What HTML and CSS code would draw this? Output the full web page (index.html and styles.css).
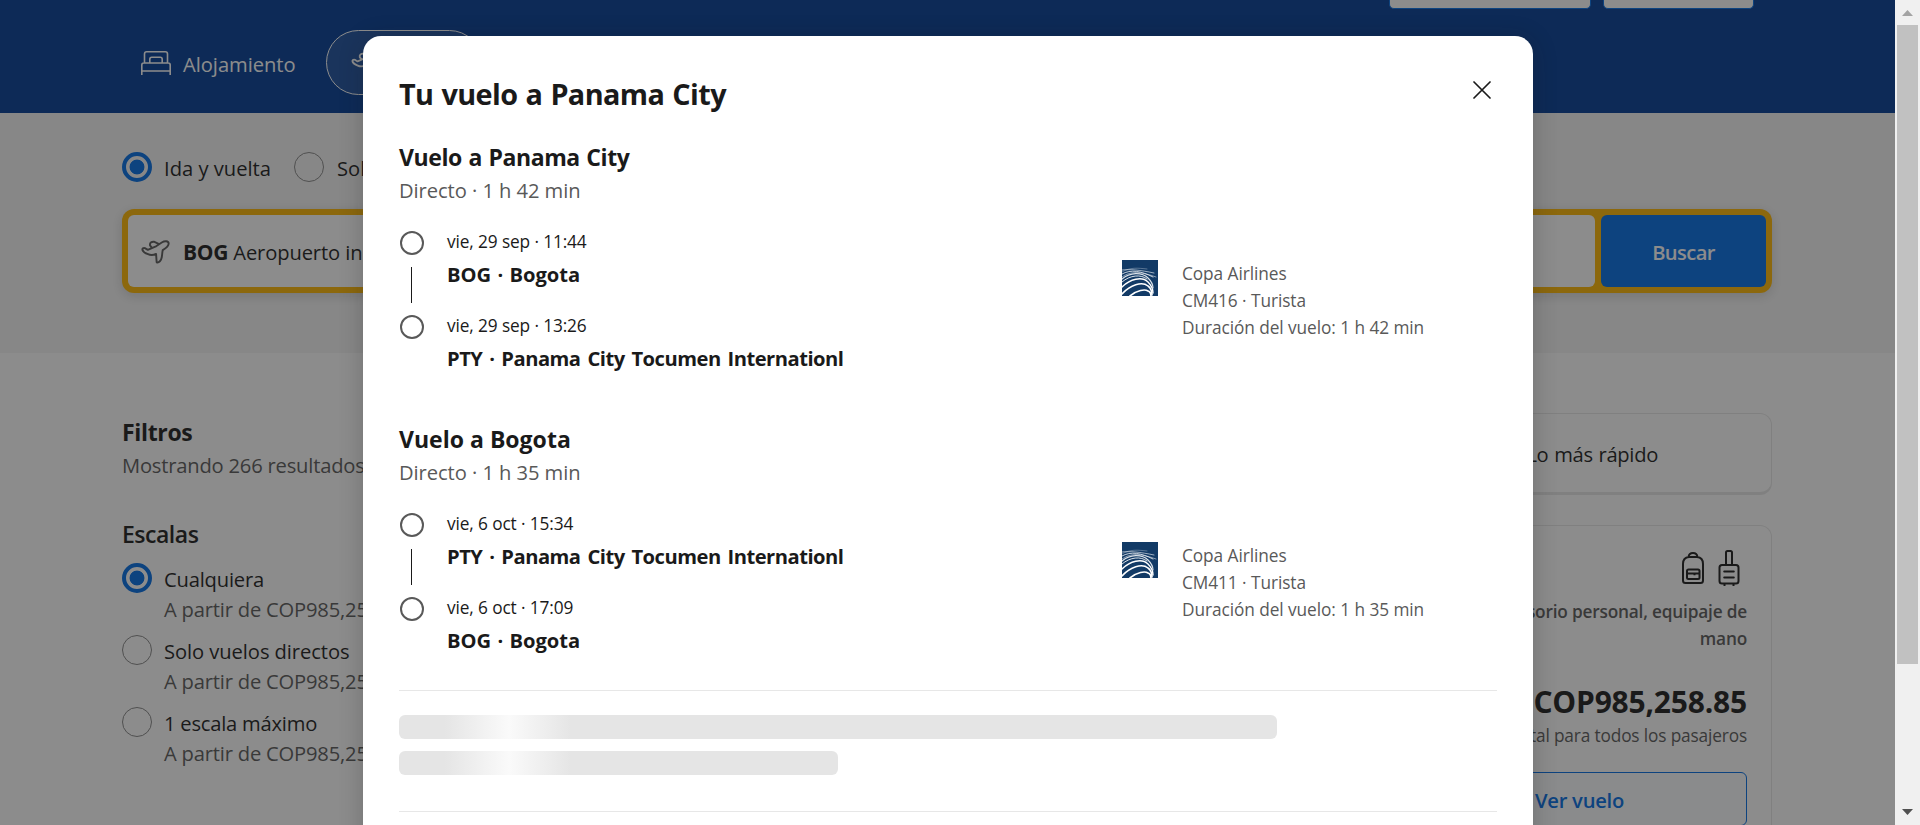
FILE: index.html
```html
<!DOCTYPE html>
<html lang="es">
<head>
<meta charset="utf-8">
<title>Vuelos</title>
<link rel="stylesheet" href="styles.css">
</head>
<body>
<svg width="0" height="0" class="defs">
  <symbol id="plane" viewBox="0 0 30 26"><path d="M1.500 11.500 C1 10 2.300 9 4 9.500 L7 11.300 L16 7.300 L21.500 3.600 C24.500 1.800 28.500 1.800 28.700 4.600 C28.800 7.500 26.500 9.300 22.500 11.600 C22 14 22 16 21.500 19 C21 22.300 18.500 25 16.200 24.200 L15.600 15.600 C12.500 17 10 17.200 7.200 15.800 C4.500 14.800 2.200 13.500 1.500 11.500 Z M11.300 9.200 L9.300 6.600 C8.800 4.200 10.800 2.600 13.300 2.800 L18.800 5.400" fill="none" stroke="currentColor" stroke-width="2" stroke-linejoin="round" stroke-linecap="round"/></symbol>
  <symbol id="copa" viewBox="0 0 36 36">
    <rect width="36" height="36" fill="#123a66"/>
    <g fill="none" stroke="#fff" stroke-linecap="round">
      <path d="M0 12 C8 7 16 8 25 9" stroke-width=".6" opacity=".5"/>
      <path d="M0 10 C8 9 18 10 32 13" stroke-width=".9" opacity=".65"/>
      <path d="M0 14 C9 9 19 11 31 17" stroke-width="1" opacity=".75"/>
      <path d="M0 17 C8 11 18 11 34 17" stroke-width=".8" opacity=".6"/>
      <path d="M0 19 C8 12 20 12 26 18 C29 21 31 24 31 28" stroke-width="1.200" opacity=".85"/>
      <path d="M0 22 C8 15 19 14 25 19" stroke-width="1" opacity=".85"/>
      <path d="M0 27 C8 19 20 16 26 22 C30 26 31 29 31 33" stroke-width="1.400"/>
      <path d="M0 34 C8 25 20 21 26 26 C30 29 30 32 30 35" stroke-width="1.600"/>
      <path d="M8 36 C15 30 23 29 26 31 C29 32 29 34 29 36" stroke-width="1.700"/>
    </g>
  </symbol>
</svg>
<div class="window">
  <div class="viewport">
    <header class="header">
      <div class="account"><span class="account-btn wide"></span><span class="account-btn"></span></div>
      <nav class="nav">
        <a class="nav-item">
          <svg width="30" height="24" viewBox="0 0 30 24" fill="none" stroke="currentColor" stroke-width="1.600"><path d="M.8 24 V14 Q.8 12 2.800 12 H27.200 Q29.200 12 29.200 14 V24 M.8 20 H29.200 M3.500 12 V3 Q3.500 .8 5.700 .8 H24.300 Q26.500 .8 26.500 3 V12 M8.800 12 V8.300 Q8.800 6.300 10.800 6.300 H19.200 Q21.200 6.300 21.200 8.300 V12"/></svg>
          <span>Alojamiento</span>
        </a>
        <a class="nav-item active"><svg width="28" height="24"><use href="#plane"/></svg></a>
      </nav>
    </header>
    <section class="search">
      <div class="trip">
        <span class="radio on"></span><span class="trip-label first">Ida y vuelta</span>
        <span class="radio"></span><span class="trip-label">Sol</span>
      </div>
      <div class="searchbox">
        <div class="field"><svg width="29" height="25"><use href="#plane"/></svg><span><b>BOG</b> Aeropuerto in</span></div>
        <div class="submit">Buscar</div>
      </div>
    </section>
    <main class="results">
      <aside class="filters">
        <h2>Filtros</h2>
        <p class="count">Mostrando 266 resultados</p>
        <h3>Escalas</h3>
        <div class="option"><span class="radio on"></span><div><p>Cualquiera</p><p class="from">A partir de COP985,258.85</p></div></div>
        <div class="option"><span class="radio"></span><div><p class="directs">Solo vuelos directos</p><p class="from">A partir de COP985,258.85</p></div></div>
        <div class="option"><span class="radio"></span><div><p class="one-stop">1 escala máximo</p><p class="from">A partir de COP985,258.85</p></div></div>
      </aside>
      <div class="list">
        <div class="tab">Lo más rápido</div>
        <article class="card">
          <div class="bags">
            <svg width="24" height="36" viewBox="0 0 24 36" fill="none" stroke="currentColor" stroke-width="2"><path d="M2 14 Q2 7.500 8 7 H16 Q22 7.500 22 14 V30.500 Q22 33 19.500 33 H4.500 Q2 33 2 30.500 Z M7.500 7 Q8 3 12 3 Q16 3 16.500 7"/><rect x="6" y="19.500" width="12.500" height="9.500" rx="1.500"/><path d="M6 23.500 H18.500 M13.500 23.500 V25.300"/></svg>
            <svg width="24" height="36" viewBox="0 0 24 36" fill="none" stroke="currentColor" stroke-width="2"><rect x="2.500" y="15" width="19" height="18.500" rx="2.500"/><path d="M9 15 V2.500 Q9 1 10.500 1 H13.500 Q15 1 15 2.500 V15 M7.200 21.500 H16.800 M7.200 27.500 H16.800" stroke-linecap="round"/><path d="M7.500 34 V36 M16.500 34 V36"/></svg>
          </div>
          <p class="bag-text">Incluye: accesorio personal, equipaje de<br>mano</p>
          <p class="price">COP985,258.85</p>
          <p class="total">Total para todos los pasajeros</p>
          <div class="view">Ver vuelo</div>
        </article>
      </div>
    </main>
    <div class="overlay">
      <section class="modal">
        <div class="modal-head">
          <h1>Tu vuelo a Panama City</h1>
          <svg class="close" width="18" height="18" viewBox="0 0 18 18" stroke="#1a1a1a" stroke-width="1.700" stroke-linecap="round"><path d="M1 1 L17 17 M17 1 L1 17"/></svg>
        </div>
        <div class="flight">
          <h2 class="to-panama">Vuelo a Panama City</h2>
          <p class="summary">Directo · 1 h 42 min</p>
          <div class="leg">
            <div class="track"><i class="stop"></i><i class="line"></i><i class="stop"></i></div>
            <div class="stops">
              <p class="time">vie, 29 sep · 11:44</p><p class="place short">BOG · Bogota</p>
              <p class="time next">vie, 29 sep · 13:26</p><p class="place">PTY · Panama City Tocumen Internationl</p>
            </div>
            <div class="airline">
              <svg width="36" height="36"><use href="#copa"/></svg>
              <div><p class="name">Copa Airlines</p><p>CM416 · Turista</p><p>Duración del vuelo: 1 h 42 min</p></div>
            </div>
          </div>
        </div>
        <div class="flight">
          <h2>Vuelo a Bogota</h2>
          <p class="summary">Directo · 1 h 35 min</p>
          <div class="leg">
            <div class="track"><i class="stop"></i><i class="line"></i><i class="stop"></i></div>
            <div class="stops">
              <p class="time">vie, 6 oct · 15:34</p><p class="place">PTY · Panama City Tocumen Internationl</p>
              <p class="time next">vie, 6 oct · 17:09</p><p class="place short">BOG · Bogota</p>
            </div>
            <div class="airline">
              <svg width="36" height="36"><use href="#copa"/></svg>
              <div><p class="name">Copa Airlines</p><p>CM411 · Turista</p><p>Duración del vuelo: 1 h 35 min</p></div>
            </div>
          </div>
        </div>
        <div class="loading"><div class="bar"></div><div class="bar half"></div></div>
      </section>
    </div>
  </div>
  <div class="scrollbar">
    <svg width="11" height="6" viewBox="0 0 11 6"><path d="M0 6 L5.500 0 L11 6 Z" fill="#a3a3a3"/></svg>
    <div class="thumb"></div>
    <svg width="11" height="6" viewBox="0 0 11 6"><path d="M0 0 L5.500 6 L11 0 Z" fill="#505050"/></svg>
  </div>
</div>
</body>
</html>
```
FILE: styles.css
```css
* { box-sizing: border-box; }
body, h1, h2, h3, p { margin: 0; }
body {
  font-family: "Open Sans", "Noto Sans", sans-serif;
  font-size: 20.16px;
  line-height: 30px;
  color: #1a1a1a;
  overflow: hidden;
}
.defs { display: block; }
.window { display: flex; height: 825px; overflow: hidden; }
.viewport { position: relative; width: 1895px; height: 825px; overflow: hidden; background: #fff; }

.header { height: 113px; padding: 0 122px; background: #003b95; color: #fff; }
.account { display: flex; justify-content: flex-end; gap: 12px; padding-right: 19px; height: 9px; }
.account-btn { width: 151px; height: 9px; background: #fff; border: 1px solid #006ce4; border-top: 0; border-radius: 0 0 5px 5px; }
.account-btn.wide { width: 202px; }
.nav { display: flex; padding-top: 21px; }
.nav-item { display: flex; align-items: center; gap: 12px; height: 65px; padding-left: 19px; width: 204px; letter-spacing: -0.04px; }
.nav-item span { padding-top: 3px; }
.nav-item.active { width: 156px; padding-left: 24px; border: 1px solid #fff; border-radius: 33px; background: rgba(255, 255, 255, .1); }

.search { height: 240px; padding: 39px 123px 0 122px; background: #f5f5f5; }
.trip { display: flex; align-items: center; height: 30px; }
.radio { flex: none; width: 30px; height: 30px; border: 1px solid #868686; border-radius: 50%; }
.radio.on { border: 4px solid #006ce4; background: radial-gradient(circle, #006ce4 7px, transparent 7.800px); }
.trip-label { padding: 1px 0 0 13px; }
.trip-label.first { width: 142px; padding-left: 12px; }
.searchbox { display: flex; gap: 6px; height: 84px; margin-top: 27px; padding: 6px; background: #ffb700; border-radius: 12px; box-shadow: 0 3px 12px rgba(26, 26, 26, .16); }
.field { display: flex; align-items: center; gap: 13px; flex: 1; padding-left: 13px; background: #fff; border-radius: 6px; }
.field span { padding-top: 2px; white-space: nowrap; letter-spacing: -.12px; }
.field svg { color: #595959; }
.field b { font-size: 21px; letter-spacing: -.3px; }
.submit { width: 165px; padding-top: 22px; line-height: 30px; border-radius: 6px; background: #006ce4; color: #fff; text-align: center; font-weight: 600; letter-spacing: -.6px; }

.results { display: flex; justify-content: space-between; padding: 60px 123px 0 122px; }
.filters { width: 380px; padding-top: 1px; }
.filters h2, .filters h3 { font-size: 23.040px; line-height: 36px; letter-spacing: -.35px; }
.filters h3 { margin: 36px 0 11px; font-weight: 600; letter-spacing: -.5px; }
.count, .from { color: #595959; }
.count { letter-spacing: -.2px; }
.option { display: flex; gap: 12px; height: 60px; margin-bottom: 12px; padding-top: 1px; letter-spacing: -.19px; white-space: nowrap; }
.option .radio { margin-top: -1px; }
.option .directs { letter-spacing: -.07px; }
.option .one-stop { letter-spacing: -.22px; }

.list { width: 360px; }
.tab { height: 82px; padding: 25px 113px 0 0; border: 1px solid #e7e7e7; border-left: 0; border-bottom-width: 3px; border-radius: 0 12px 12px 0; text-align: right; letter-spacing: -.3px; word-spacing: .8px; }
.card { height: 400px; margin-top: 30px; padding: 24px 24px 0 0; border: 1px solid #e7e7e7; border-left: 0; border-radius: 0 12px 0 0; display: flex; flex-direction: column; align-items: flex-end; }
.bags { display: flex; gap: 12px; padding-right: 6px; height: 36px; }
.bag-text { margin-top: 12px; font-size: 17.280px; line-height: 27px; font-weight: 600; letter-spacing: -.2px; color: #595959; text-align: right; white-space: nowrap; }
.price { margin-top: 29px; font-size: 30px; line-height: 42px; font-weight: 700; letter-spacing: -.2px; }
.total { margin-top: -1px; font-size: 17.280px; line-height: 27px; color: #595959; letter-spacing: -.15px; }
.view { width: 335px; height: 54px; margin-top: 23px; padding-top: 12px; border: 1px solid #006ce4; border-radius: 6px; color: #006ce4; background: #fafcff; text-align: center; font-weight: 600; letter-spacing: -.24px; }

.overlay { position: absolute; inset: 0; padding: 36px 362px 0 363px; background: rgba(26, 26, 26, .5); }
.modal { height: 900px; padding: 37px 36px 0; background: #fff; border-radius: 18px; box-shadow: 0 3px 24px rgba(26, 26, 26, .24); }
.modal-head { display: flex; justify-content: space-between; padding-right: 6px; }
.modal-head h1 { font-size: 28.800px; line-height: 42px; letter-spacing: -.6px; word-spacing: 1.200px; }
.close { margin-top: 8px; }
.flight { margin-top: 24px; padding-bottom: 24px; }
.flight h2 { font-size: 23.040px; line-height: 36px; }
.flight .to-panama { letter-spacing: -.43px; word-spacing: 1px; }
.summary { color: #595959; letter-spacing: -.06px; }
.leg { display: flex; align-items: center; margin-top: 23px; height: 145px; }
.track { display: flex; flex-direction: column; align-items: center; gap: 12px; align-self: flex-start; padding-top: 3px; margin-left: 1px; width: 24px; }
.stop { width: 24px; height: 24px; border: 2px solid #595959; border-radius: 50%; }
.line { width: 1px; height: 36px; margin-right: 1px; background: #1a1a1a; }
.stops { flex: 1; padding-left: 23px; }
.time { font-size: 17.280px; line-height: 27px; letter-spacing: -.12px; }
.time.next { margin-top: 23px; }
.place { margin-top: 4px; font-weight: 700; letter-spacing: -.5px; word-spacing: 2.100px; }
.place.short { letter-spacing: 0; word-spacing: 1px; }
.airline { display: flex; gap: 24px; width: 375px; color: #595959; font-size: 17.280px; line-height: 27px; letter-spacing: -.07px; }
.loading { margin-top: 11px; padding: 24px 0 36px; border: 1px solid #e7e7e7; border-width: 1px 0; }
.bar { width: 80%; height: 24px; border-radius: 6px; background: linear-gradient(90deg, #e5e5e5 46px, #fafafa 110px, #e5e5e5 172px); }
.bar.half { width: 40%; margin-top: 12px; }

.scrollbar { width: 25px; padding: 10px 2px 0; background: #f0f0f0; display: flex; flex-direction: column; align-items: center; }
.scrollbar svg { flex: none; }
.thumb { flex: none; width: 21px; height: 639px; margin: 9px 0 145px; background: #c1c1c1; }
```
